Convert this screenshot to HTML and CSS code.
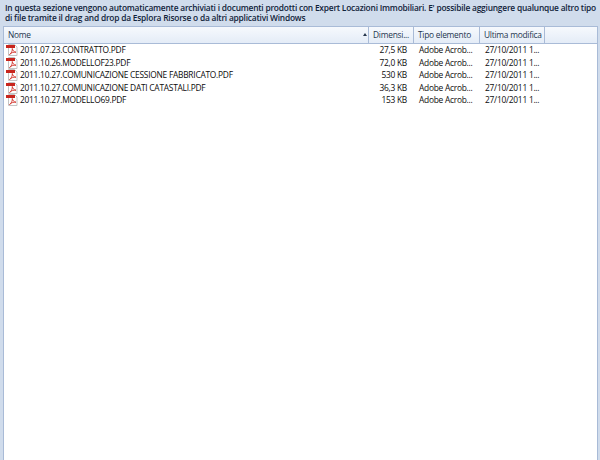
FILE: index.html
```html
<!DOCTYPE html>
<html lang="it">
<head>
<meta charset="utf-8">
<title>Documenti</title>
<link rel="stylesheet" href="styles.css">
</head>
<body>
<svg class="defs" width="0" height="0" aria-hidden="true">
  <symbol id="pdf" viewBox="0 0 12 12">
    <path d="M2.500.5h6l2.500 2.500v8.500h-8.500z" fill="#fdfdfd" stroke="#c4c4c4"/>
    <rect x="0" y="1" width="9" height="3" fill="#c8251d"/>
    <path d="M3.500 10.500c2-1 3-4 2.800-6 .4 2 1.500 3.500 3.700 3.700-2.200-.2-4.500.2-6.500 2.300z" fill="none" stroke="#d2352c" stroke-width=".9"/>
  </symbol>
</svg>
<main class="page">
  <p class="intro">In questa sezione vengono automaticamente archiviati i documenti prodotti con Expert Locazioni Immobiliari. E' possibile aggiungere qualunque altro tipo di file tramite il drag and drop da Esplora Risorse o da altri applicativi Windows</p>
  <section class="list">
    <div class="row head">
      <div class="c name">Nome<span class="sort"></span></div>
      <div class="c size">Dimensi...</div>
      <div class="c type">Tipo elemento</div>
      <div class="c date">Ultima modifica</div>
      <div class="c rest"></div>
    </div>
    <div class="body">
      <div class="row item"><div class="c name"><svg class="ico"><use href="#pdf"/></svg>2011.07.23.CONTRATTO.PDF</div><div class="c size">27,5 KB</div><div class="c type">Adobe Acrob...</div><div class="c date">27/10/2011 1...</div></div>
      <div class="row item"><div class="c name"><svg class="ico"><use href="#pdf"/></svg>2011.10.26.MODELLOF23.PDF</div><div class="c size">72,0 KB</div><div class="c type">Adobe Acrob...</div><div class="c date">27/10/2011 1...</div></div>
      <div class="row item"><div class="c name"><svg class="ico"><use href="#pdf"/></svg>2011.10.27.COMUNICAZIONE CESSIONE FABBRICATO.PDF</div><div class="c size">530 KB</div><div class="c type">Adobe Acrob...</div><div class="c date">27/10/2011 1...</div></div>
      <div class="row item"><div class="c name"><svg class="ico"><use href="#pdf"/></svg>2011.10.27.COMUNICAZIONE DATI CATASTALI.PDF</div><div class="c size">36,3 KB</div><div class="c type">Adobe Acrob...</div><div class="c date">27/10/2011 1...</div></div>
      <div class="row item"><div class="c name"><svg class="ico"><use href="#pdf"/></svg>2011.10.27.MODELLO69.PDF</div><div class="c size">153 KB</div><div class="c type">Adobe Acrob...</div><div class="c date">27/10/2011 1...</div></div>
    </div>
  </section>
</main>
</body>
</html>
```
FILE: styles.css
```css
* { box-sizing: border-box; }
html, body { margin: 0; height: 100%; overflow: hidden; }
body { font: 8.4px/12.5px "Open Sans", "Noto Sans", sans-serif; letter-spacing: -.25px; color: #0c0c0c; background: #d0dcec; }
.defs { position: absolute; }
.page { height: 460px; display: flex; flex-direction: column; padding: 3px 2px 0 3px; }
.intro { margin: 0 0 1px 2px; height: 22px; line-height: 10px; font-weight: 600; color: #10233a; font-size: 8.4px; letter-spacing: -.21px; }
.list { flex: 1; display: flex; flex-direction: column; background: #fff; border: 1px solid #a9bbd7; border-bottom: 0; }
.row { display: flex; }
.head { height: 17px; background: linear-gradient(#f6f9fd, #e4ecf7); border-bottom: 1px solid #a9bbd7; color: #24364f; }
.head .c { line-height: 15px; padding-left: 4px; border-right: 1px solid #a9bbd7; }
.c { flex: none; white-space: nowrap; overflow: hidden; padding-left: 4px; }
.name { width: 365px; position: relative; }
.size { width: 45px; }
.type { width: 66px; }
.date { width: 65px; }
.rest { flex: 1; border-right: 0 !important; }
.sort { position: absolute; right: 1px; top: 6px; border: 2.5px solid transparent; border-bottom: 3px solid #25354c; border-top: 0; }
.item { height: 12.5px; align-items: center; }
.item .name { display: flex; align-items: center; padding-left: 2px; }
.item .size { text-align: right; padding: 0 7px 0 0; }
.item .type, .item .date { padding-left: 5px; }
.ico { width: 12px; height: 12px; margin-right: 2px; flex: none; }
```
